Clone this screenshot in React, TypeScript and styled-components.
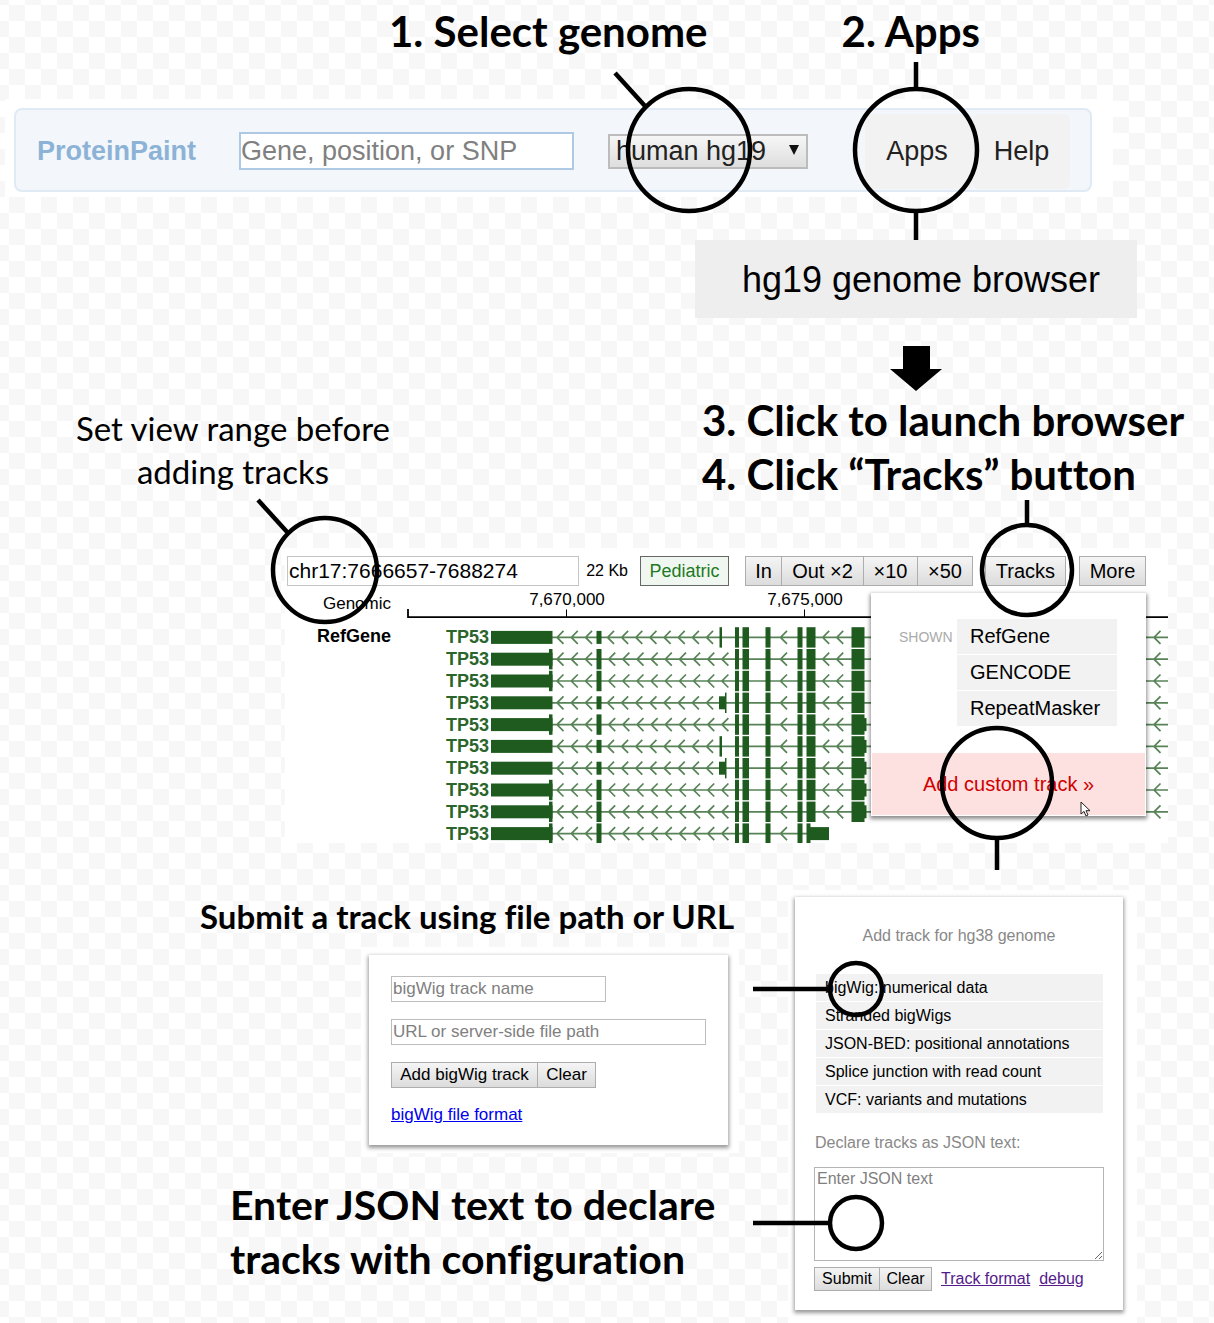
import React from "react";
import styled, { createGlobalStyle } from "styled-components";

const sans = `"Liberation Sans", Arial, sans-serif`;
const display = `Lato, "Open Sans", sans-serif`;
const green = "#1f5a1f";

const GlobalStyle = createGlobalStyle`
  *, *::before, *::after { box-sizing: border-box; }
  body {
    margin: 0;
    font-family: ${sans};
    color: #000;
    background: repeating-conic-gradient(#fff 0 25%, #f7f7f7 0 50%) 9px 5px / 32px 32px;
  }
  button, input, select, textarea { font-family: inherit; margin: 0; border-radius: 0; }
`;

const Page = styled.main`
  display: flex;
  flex-direction: column;
  overflow-x: hidden;
`;

const Heading = styled.h2<{ $size?: number }>`
  margin: 0;
  font: 700 ${(p) => p.$size ?? 42}px/${(p) => (p.$size === 33 ? 40 : 54)}px ${display};
  font-variant-ligatures: none;
  white-space: nowrap;
`;

/* Top steps and navigation bar */

const TopSteps = styled.div`
  display: flex;
  gap: 134px;
  height: 99px;
  padding: 4px 0 0 389px;
`;

const NavFrame = styled.div`
  margin: 0 101px 0 5px;
  padding: 9px 21px 5px 9px;
  background: #fff;
`;

const Nav = styled.nav`
  display: flex;
  align-items: center;
  height: 84px;
  padding: 2px 20px 0 21px;
  border: 2px solid #dfeaf4;
  border-radius: 8px;
  background: #f3f7fc;
`;

const Brand = styled.span`
  width: 202px;
  font-size: 27px;
  font-weight: 700;
  color: #8cb3d6;
`;

const SearchInput = styled.input`
  flex: 1;
  min-width: 0;
  height: 38px;
  padding: 0;
  border: 2px solid #adc9e3;
  background: #fff;
  font-size: 27px;
  &::placeholder { color: #808080; opacity: 1; }
`;

const SelectBox = styled.span`
  position: relative;
  display: flex;
  width: 200px;
  margin: 0 57px 0 34px;
`;

const GenomeSelect = styled.select`
  width: 100%;
  height: 35px;
  padding: 0 6px;
  appearance: none;
  border: 2px solid #bcbcbc;
  background: linear-gradient(#f6f6f6, #dedede);
  color: #222;
  font-size: 27px;
  line-height: 30px;
`;

const SelectArrow = styled.svg`
  position: absolute;
  right: 8px;
  top: 10px;
  pointer-events: none;
`;

const NavButton = styled.button<{ $wide?: boolean }>`
  position: relative;
  width: ${(p) => (p.$wide ? 108 : 97)}px;
  height: 75px;
  padding: ${(p) => (p.$wide ? "0 4px 0 0" : "0")};
  border: 0;
  border-radius: 6px;
  background: #f2f2f2;
  color: #222;
  font-size: 27px;
`;

const AppsMenu = styled.div`
  display: flex;
  flex-direction: column;
  align-items: center;
  align-self: flex-end;
  gap: 28px;
  width: 442px;
  margin: 43px 77px 0 0;
`;

const AppsItem = styled.button`
  width: 100%;
  height: 78px;
  padding: 2px 0 0 10px;
  border: 0;
  background: #eee;
  font-size: 36px;
`;

/* Callouts drawn over the controls they point at */

const CalloutSvg = styled.svg<{ $x: number; $y: number }>`
  position: absolute;
  left: ${(p) => p.$x}px;
  top: ${(p) => p.$y}px;
  width: 1px;
  height: 1px;
  overflow: visible;
  pointer-events: none;
  z-index: 3;
`;

type CalloutProps = { x: number; y: number; r: number; lines: string };

function Callout({ x, y, r, lines }: CalloutProps) {
  return (
    <CalloutSvg $x={x} $y={y} fill="none" stroke="#000" strokeWidth="4.5" aria-hidden="true">
      <circle r={r} />
      <path d={lines} />
    </CalloutSvg>
  );
}

/* Middle steps */

const MiddleSteps = styled.div`
  display: flex;
  justify-content: space-between;
  height: 157px;
  padding: 2px 33px 0 73px;
`;

const Note = styled.p`
  width: 320px;
  margin: 14px 0 0;
  font: 400 33px/43px ${display};
  font-variant-ligatures: none;
  text-align: center;
  white-space: nowrap;
`;

const StepPair = styled.div`
  width: 479px;
`;

/* Genome browser */

const Browser = styled.section`
  position: relative;
  margin: 0 46px 0 285px;
  padding-top: 8px;
  background: #fff;
`;

const Toolbar = styled.div`
  display: flex;
  align-items: center;
  height: 30px;
  padding: 0 22px 0 2px;
`;

const RangeBox = styled.span`
  position: relative;
  display: flex;
  flex: 1;
`;

const RangeInput = styled.input`
  width: 100%;
  height: 30px;
  padding: 0 1px;
  border: 1px solid #c4c4c4;
  background: #fff;
  font-size: 21px;
`;

const Span = styled.span`
  margin: 0 12px 0 7px;
  font-size: 16px;
`;

const Pediatric = styled.button`
  width: 89px;
  height: 30px;
  padding: 0;
  border: 1px solid #666;
  background: #f0f7f0;
  color: #1e7a24;
  font-size: 18px;
`;

const ButtonGroup = styled.div<{ $gap: number }>`
  position: relative;
  display: flex;
  margin-left: ${(p) => p.$gap}px;
`;

const GreyButton = styled.button<{ $w: number; $size?: number; $h?: number }>`
  width: ${(p) => p.$w}px;
  height: ${(p) => p.$h ?? 30}px;
  padding: 0;
  border: 1px solid #adadad;
  background: linear-gradient(#f5f5f5, #dcdcdc);
  color: #000;
  font-size: ${(p) => p.$size ?? 20}px;
  white-space: nowrap;
  & + & { margin-left: -1px; }
`;

const TrackArea = styled.div`
  display: flex;
  justify-content: space-between;
  height: 257px;
`;

const TrackNames = styled.div`
  width: 106px;
  padding-top: 2px;
  text-align: right;
  font-size: 17px;
  line-height: 32px;
`;

const RefName = styled.div`
  font-size: 18px;
  font-weight: 700;
`;

const TracksMenu = styled.div`
  position: absolute;
  top: 45px;
  right: 22px;
  width: 275px;
  padding: 26px 1px 1px;
  background: #fff;
  box-shadow: 0 2px 4px 1px rgba(0, 0, 0, 0.45);
`;

const ShownRow = styled.div`
  display: flex;
  justify-content: space-between;
  height: 134px;
  padding: 0 28px 0 27px;
`;

const ShownLabel = styled.span`
  font-size: 14px;
  line-height: 36px;
  color: #aaa;
`;

const ShownList = styled.div`
  display: flex;
  flex-direction: column;
  gap: 1px;
  width: 160px;
`;

const ShownItem = styled.button`
  height: 35px;
  padding: 0 0 0 13px;
  border: 0;
  background: #f2f2f2;
  font-size: 20px;
  text-align: left;
`;

const AddCustom = styled.button`
  position: relative;
  width: 100%;
  height: 62px;
  padding: 0;
  border: 0;
  background: #fde0e0;
  color: #d00000;
  font-size: 20px;
`;

const Cursor = styled.svg`
  position: absolute;
  left: 208px;
  top: 48px;
`;

/* Forms */

const Forms = styled.div`
  display: flex;
  justify-content: space-between;
  padding: 47px 77px 0 200px;
`;

const FormsLeft = styled.div`
  display: flex;
  flex-direction: column;
  width: 543px;
  padding-top: 6px;
`;

const Frame = styled.div<{ $right?: boolean }>`
  padding: 8px 11px 8px 8px;
  background: #fff;
  ${(p) => (p.$right ? "width: 349px; padding: 7px 14px 13px 7px;" : "width: 378px; margin: 11px 0 0 161px;")}
`;

const Card = styled.form`
  position: relative;
  display: flex;
  flex-direction: column;
  background: #fff;
  box-shadow: 0 2px 4px 1px rgba(0, 0, 0, 0.4);
`;

const BigWigCard = styled(Card)`
  align-items: flex-start;
  gap: 17px;
  height: 190px;
  padding: 21px 22px 0;
`;

const TextInput = styled.input<{ $full?: boolean }>`
  width: ${(p) => (p.$full ? "100%" : "215px")};
  height: 26px;
  padding: 0 1px;
  border: 1px solid #bdbdbd;
  font-size: 17px;
  &::placeholder { color: #808080; opacity: 1; }
`;

const BlueLink = styled.a`
  font-size: 17px;
  line-height: 20px;
  color: #0000ee;
`;

const JsonSteps = styled.div`
  padding: 25px 0 0 30px;
`;

const TrackCard = styled(Card)`
  height: 413px;
  padding: 29px 20px 0;
`;

const CardTitle = styled.div`
  font-size: 16px;
  line-height: 20px;
  text-align: center;
  color: #888;
`;

const TypeList = styled.div`
  display: flex;
  flex-direction: column;
  gap: 1px;
  margin: 28px 0 20px 1px;
`;

const TypeItem = styled.button`
  height: 27px;
  padding: 0 0 0 9px;
  border: 0;
  background: #f2f2f2;
  font-size: 16px;
  text-align: left;
`;

const JsonLabel = styled.label`
  font-size: 16px;
  line-height: 20px;
  color: #888;
`;

const JsonText = styled.textarea`
  width: 290px;
  height: 94px;
  margin: 14px 0 6px -1px;
  padding: 2px;
  border: 1px solid #b5b5b5;
  background: #fff;
  font-size: 16px;
  &::placeholder { color: #808080; opacity: 1; }
`;

const Actions = styled.div<{ $pull?: boolean }>`
  display: flex;
  align-items: center;
  margin-left: ${(p) => (p.$pull ? -1 : 0)}px;
`;

const VisitedLink = styled.a`
  margin-left: 9px;
  font-size: 16px;
  color: #551a8b;
`;

type Isoform = { kind: "thin" | "block" | "full"; extended?: boolean; short?: boolean };

const isoforms: Isoform[] = [
  { kind: "thin" },
  { kind: "full" },
  { kind: "full" },
  { kind: "block" },
  { kind: "full", extended: true },
  { kind: "thin", extended: true },
  { kind: "block", extended: true },
  { kind: "full", extended: true },
  { kind: "full", extended: true },
  { kind: "full", short: true },
];

const ticks: [number, string][] = [
  [165, "7,670,000"],
  [403, "7,675,000"],
  [641, "7,680,000"],
];

function GeneRow({ iso, y }: { iso: Isoform; y: number }) {
  const full = iso.kind === "full";
  const tall: [number, number][] = [[334, 4], [341.5, 6.5], [364.5, 5], [396.5, 5]];
  const low: [number, number][] = [[90, 61.5]];
  const tips = [156, 170.3, 184.5, 379.5];
  for (let k = 0; k < (full ? 9 : 8); k++) tips.push((full ? 207.7 : 206.5) + 14.15 * k);
  if (full) tall.push([148, 3.5], [195.5, 5]);
  else low.push([195.5, 5]);
  if (iso.kind === "thin") tall.push([318.5, 2.5]);
  if (iso.kind === "block") {
    low.push([318, 6]);
    tall.push([324, 1.5]);
  }
  if (iso.short) {
    tall.push([405.5, 4]);
    low.push([406, 22]);
  } else {
    tall.push([405.5, 9], [450.5, 13]);
    tips.push(421.7, 435.7, 753);
  }
  if (iso.extended) low.push([463, 2.5]);
  return (
    <g transform={`translate(0 ${y})`}>
      <text x="45" y="6" fontSize="18" fontWeight="700" fill="#2b652b">TP53</text>
      <path
        d={`M151 0H${iso.short ? 410 : 767}` + tips.map((x) => `M${x + 6.5} -6.5L${x} 0l6.5 6.5`).join("")}
        fill="none"
        stroke={green}
        strokeOpacity="0.75"
        strokeWidth="1.7"
      />
      {low.map(([x, w]) => <rect key={x} x={x} y="-6.5" width={w} height="13" fill={green} />)}
      {tall.map(([x, w]) => <rect key={x} x={x} y="-10.2" width={w} height="20.4" fill={green} />)}
    </g>
  );
}

function GenomeChart() {
  return (
    <svg width="767" height="257" viewBox="0 0 767 257" fontFamily="Liberation Sans, Arial, sans-serif">
      <path d="M7 23V31.2H767" fill="none" stroke="#000" strokeWidth="1.8" />
      {ticks.map(([x, label]) => (
        <g key={label}>
          <text x={x + 1} y="19" fontSize="17" textAnchor="middle">{label}</text>
          <path d={`M${x + 0.5} 23.5V31`} stroke="#000" />
        </g>
      ))}
      {isoforms.map((iso, i) => <GeneRow key={i} iso={iso} y={51.4 + i * 21.8} />)}
    </svg>
  );
}

export default function App() {
  const stop = (e: React.FormEvent) => e.preventDefault();
  return (
    <Page>
      <GlobalStyle />
      <TopSteps>
        <Heading>1. Select genome</Heading>
        <Heading>2. Apps</Heading>
      </TopSteps>
      <NavFrame>
        <Nav>
          <Brand>ProteinPaint</Brand>
          <SearchInput placeholder="Gene, position, or SNP" aria-label="Gene, position, or SNP" />
          <SelectBox>
            <GenomeSelect aria-label="Genome">
              <option>human hg19</option>
            </GenomeSelect>
            <SelectArrow width="12" height="12" aria-hidden="true">
              <path d="M1 1h10L6 11z" fill="#111" />
            </SelectArrow>
            <Callout x={81} y={16} r={61} lines="M-74 -77L-44 -44" />
          </SelectBox>
          <NavButton $wide>
            Apps
            <Callout x={51} y={36} r={61} lines="M0 -88V-61M0 61V90" />
          </NavButton>
          <NavButton>Help</NavButton>
        </Nav>
      </NavFrame>
      <AppsMenu>
        <AppsItem>hg19 genome browser</AppsItem>
        <svg width="52" height="45" aria-hidden="true">
          <path d="M13 0h27v23h12L26 45 0 23h13z" />
        </svg>
      </AppsMenu>
      <MiddleSteps>
        <Note>
          Set view range before
          <br />
          adding tracks
        </Note>
        <StepPair>
          <Heading>3. Click to launch browser</Heading>
          <Heading>4. Click “Tracks” button</Heading>
        </StepPair>
      </MiddleSteps>
      <Browser>
        <Toolbar>
          <RangeBox>
            <RangeInput defaultValue="chr17:7666657-7688274" aria-label="View range" />
            <Callout x={38} y={14} r={52} lines="M-67 -70L-37 -37" />
          </RangeBox>
          <Span>22 Kb</Span>
          <Pediatric>Pediatric</Pediatric>
          <ButtonGroup $gap={16}>
            <GreyButton $w={37}>In</GreyButton>
            <GreyButton $w={83}>Out ×2</GreyButton>
            <GreyButton $w={55}>×10</GreyButton>
            <GreyButton $w={56}>×50</GreyButton>
          </ButtonGroup>
          <ButtonGroup $gap={12}>
            <GreyButton $w={81}>Tracks</GreyButton>
            <Callout x={42} y={14} r={45} lines="M0 -70V-45" />
          </ButtonGroup>
          <ButtonGroup $gap={13}>
            <GreyButton $w={67}>More</GreyButton>
          </ButtonGroup>
        </Toolbar>
        <TrackArea>
          <TrackNames>
            <div>Genomic</div>
            <RefName>RefGene</RefName>
          </TrackNames>
          <GenomeChart />
        </TrackArea>
        <TracksMenu>
          <ShownRow>
            <ShownLabel>SHOWN</ShownLabel>
            <ShownList>
              <ShownItem>RefGene</ShownItem>
              <ShownItem>GENCODE</ShownItem>
              <ShownItem>RepeatMasker</ShownItem>
            </ShownList>
          </ShownRow>
          <AddCustom>
            Add custom track »
            <Cursor width="12" height="17" viewBox="0 0 12 17" aria-hidden="true">
              <path d="M1 1v12l3-2.6 2 4.6 2-1-2-4.3h4z" fill="#fff" stroke="#222" />
            </Cursor>
            <Callout x={125} y={30} r={55} lines="M0 55V87" />
          </AddCustom>
        </TracksMenu>
      </Browser>
      <Forms>
        <FormsLeft>
          <Heading $size={33}>Submit a track using file path or URL</Heading>
          <Frame>
            <BigWigCard onSubmit={stop}>
              <TextInput placeholder="bigWig track name" aria-label="bigWig track name" />
              <TextInput $full placeholder="URL or server-side file path" aria-label="URL or server-side file path" />
              <Actions>
                <GreyButton $w={147} $size={17} $h={26}>Add bigWig track</GreyButton>
                <GreyButton $w={59} $size={17} $h={26}>Clear</GreyButton>
              </Actions>
              <BlueLink href="#bigwig">bigWig file format</BlueLink>
            </BigWigCard>
          </Frame>
          <JsonSteps>
            <Heading $size={41}>Enter JSON text to declare</Heading>
            <Heading $size={41}>tracks with configuration</Heading>
          </JsonSteps>
        </FormsLeft>
        <Frame $right>
          <TrackCard onSubmit={stop}>
            <CardTitle>Add track for hg38 genome</CardTitle>
            <TypeList>
              <TypeItem>bigWig: numerical data</TypeItem>
              <TypeItem>Stranded bigWigs</TypeItem>
              <TypeItem>JSON-BED: positional annotations</TypeItem>
              <TypeItem>Splice junction with read count</TypeItem>
              <TypeItem>VCF: variants and mutations</TypeItem>
            </TypeList>
            <JsonLabel htmlFor="json">Declare tracks as JSON text:</JsonLabel>
            <JsonText id="json" placeholder="Enter JSON text" />
            <Actions $pull>
              <GreyButton $w={66} $size={16} $h={24}>Submit</GreyButton>
              <GreyButton $w={53} $size={16} $h={24}>Clear</GreyButton>
              <VisitedLink href="#format">Track format</VisitedLink>
              <VisitedLink href="#debug">debug</VisitedLink>
            </Actions>
            <Callout x={61} y={92} r={26} lines="M-103 0H-26" />
            <Callout x={61} y={326} r={26} lines="M-103 0H-26" />
          </TrackCard>
        </Frame>
      </Forms>
    </Page>
  );
}
